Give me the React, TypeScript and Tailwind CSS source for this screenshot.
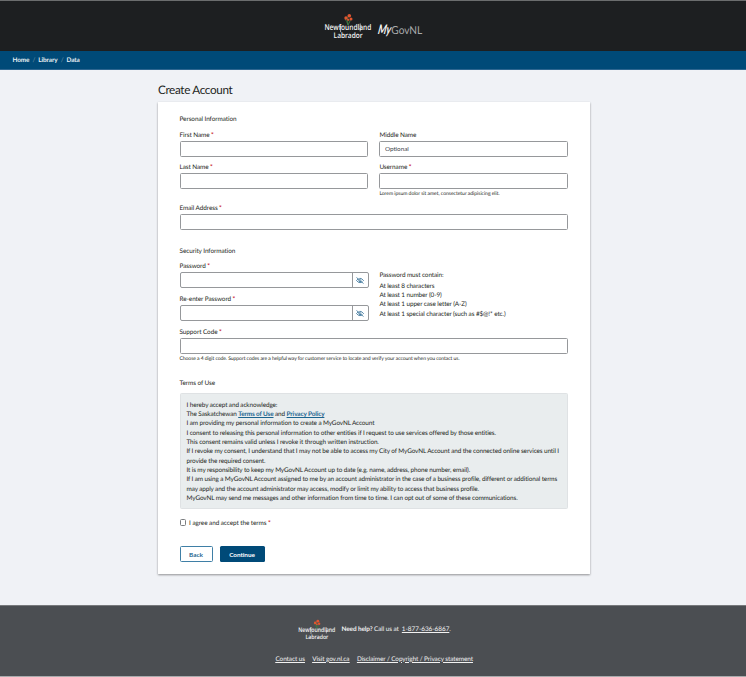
import type { ReactNode } from 'react'

function Wordmark({ className }: { className: string }) {
  return (
    <svg viewBox="0 0 50 28" className={className} fontFamily="'Open Sans', sans-serif" fill="#f4f4f4" overflow="visible">
      <path d="M26 12 Q25 7 26.2 3 M26 12 Q25 8 23 6 M26 12 Q28 9 28.5 6" stroke="#3f7a45" strokeWidth="0.9" fill="none" />
      <g fill="#e2552f">
        <circle cx="24" cy="5" r="1.7" />
        <circle cx="27.3" cy="2.8" r="1.8" />
        <circle cx="29" cy="6" r="1.5" />
        <circle cx="26.2" cy="6.8" r="1.1" />
      </g>
      <path d="M18.6 12.5 V19.2 M38.2 10.5 V18.4" stroke="#f4f4f4" strokeWidth="0.7" />
      <text x="2.4" y="16.8" fontSize="8" fontWeight="600" textLength="47" lengthAdjust="spacingAndGlyphs">Newfoundland</text>
      <text x="11.6" y="24.9" fontSize="7.6" fontWeight="600" textLength="29" lengthAdjust="spacingAndGlyphs">Labrador</text>
    </svg>
  )
}

function Label({ children, required }: { children: ReactNode; required?: boolean }) {
  return (
    <div className="h-[10px] whitespace-nowrap text-[6.4px] leading-[11.4px] tracking-[-0.07px]">
      {children}
      {required && <span className="font-bold text-[#c8202f]"> *</span>}
    </div>
  )
}

function Field({ label, required, placeholder }: { label: string; required?: boolean; placeholder?: string }) {
  return (
    <div>
      <Label required={required}>{label}</Label>
      <input
        placeholder={placeholder}
        className="mt-[1px] block h-4 w-full rounded-[1.5px] border border-[#96989b] bg-white px-[4.5px] text-[6.4px] tracking-[-0.05px] placeholder:text-[#40464c]"
      />
    </div>
  )
}

function EyeSlash() {
  return (
    <svg viewBox="0 0 16 14" className="h-[7px] w-[8px]" fill="none" stroke="#24648f" strokeWidth="1.5">
      <path d="M1 7 Q4.2 2.6 8 2.6 T15 7 Q11.8 11.4 8 11.4 T1 7Z" />
      <circle cx="8" cy="7" r="2.4" />
      <path d="M2.2 0 L16 12" stroke="#ffffff" />
      <path d="M1 1 L15 13" />
    </svg>
  )
}

function PasswordField({ label }: { label: string }) {
  return (
    <div>
      <Label required>{label}</Label>
      <div className="mt-[1px] flex h-4 w-[189px] rounded-[2px] border border-[#96989b]">
        <input type="password" className="min-w-0 flex-1" />
        <button type="button" className="flex w-4 items-center justify-center border-l border-[#96989b]">
          <EyeSlash />
        </button>
      </div>
    </div>
  )
}

const link = 'font-bold text-[#1b648f] underline'

export default function App() {
  return (
    <div className="flex h-[677px] w-[746px] flex-col overflow-hidden border-b border-[#a9abad] bg-[#f0f2f6] font-['Lato',sans-serif] text-[6.22px] text-[#1c1f22] [text-rendering:geometricPrecision]">
      <header className="flex h-[51px] shrink-0 justify-center border-t border-[#6b6d6e] bg-[#1d1f21] pt-[12px]">
        <Wordmark className="h-7 w-[50px]" />
        <svg viewBox="0 0 48 20" className="ml-[4px] mt-[7px] h-5 w-12 overflow-visible">
          <g transform="skewX(-10)">
            <text x="4" y="14.3" fontFamily="Lato" fontSize="13" fontWeight="700" fontStyle="italic" fill="#f5f5f5" textLength="13" lengthAdjust="spacingAndGlyphs">My</text>
          </g>
          <text x="15.3" y="14.3" fontFamily="Lato" fontSize="11" fill="#a9abad" textLength="31" lengthAdjust="spacingAndGlyphs">GovNL</text>
        </svg>
      </header>
      <nav className="flex h-[19px] shrink-0 items-center gap-[3px] border-b border-[#2e6690] bg-[#004a78] pl-[12.4px] pt-[2.6px] text-[6.4px] font-bold tracking-[-0.07px] text-[#e9f0f4]">
        <span>Home</span>
        <span className="font-normal text-[#7e99aa]">/</span>
        <span>Library</span>
        <span className="font-normal text-[#7e99aa]">/</span>
        <span>Data</span>
      </nav>
      <main className="ml-[158px] w-[431.5px] flex-1">
        <h1 className="mt-[12px] h-[16px] text-[11.7px] leading-[16px] tracking-[-0.34px]">Create Account</h1>
        <form className="mt-[3.5px] flex h-[472.5px] flex-col bg-white px-[21.5px] pt-[12.5px] shadow-[0_1px_2px_rgba(0,0,0,0.4)]">
          <Label>Personal Information</Label>
          <div className="mt-[5.5px] grid grid-cols-2 gap-x-[11.3px] gap-y-[5.7px]">
            <Field label="First Name" required />
            <Field label="Middle Name" placeholder="Optional" />
            <Field label="Last Name" required />
            <div>
              <Field label="Username" required />
              <p className="h-[10px] text-[5.1px] leading-[11px] tracking-[-0.055px]">Lorem ipsum dolor sit amet, consectetur adipisicing elit.</p>
            </div>
          </div>
          <div className="mt-[4.3px]">
            <Field label="Email Address" required />
          </div>
          <div className="mt-[15.5px]">
            <Label>Security Information</Label>
          </div>
          <div className="mt-[5.5px] grid grid-cols-2 gap-x-[11.3px]">
            <div className="flex flex-col gap-[5.7px]">
              <PasswordField label="Password" />
              <PasswordField label="Re-enter Password" />
            </div>
            <div className="pt-[9.2px] text-[6.4px] leading-[9.33px] tracking-[-0.1px]">
              <p>Password must contain:</p>
              <ul className="mt-[1.8px]">
                <li>At least 8 characters</li>
                <li>At least 1 number (0-9)</li>
                <li>At least 1 upper case letter (A-Z)</li>
                <li>At least 1 special character (such as #$@!* etc.)</li>
              </ul>
            </div>
          </div>
          <div className="mt-[5.8px]">
            <Field label="Support Code" required />
            <p className="h-[10px] text-[5.1px] leading-[10.6px] tracking-[-0.088px]">
              Choose a 4 digit code. Support codes are a helpful way for customer service to locate and verify your account when you contact us.
            </p>
          </div>
          <div className="mt-[14px]">
            <Label>Terms of Use</Label>
          </div>
          <div className="mt-[5.5px] h-[116px] shrink-0 whitespace-nowrap rounded-[1.5px] border border-[#dfe2e4] bg-[#e9edee] pl-[6px] pt-[6.2px] text-[6.4px] leading-[9.33px] tracking-[-0.115px]">
            <p>I hereby accept and acknowledge:</p>
            <p>The Saskatchewan <a className={link}>Terms of Use</a> and <a className={link}>Privacy Policy</a></p>
            <p>I am providing my personal information to create a MyGovNL Account</p>
            <p>I consent to releasing this personal information to other entities if I request to use services offered by those entities.</p>
            <p>This consent remains valid unless I revoke it through written instruction.</p>
            <p>If I revoke my consent, I understand that I may not be able to access my City of MyGovNL Account and the connected online services until I<br />provide the required consent.</p>
            <p>It is my responsibility to keep my MyGovNL Account up to date (e.g. name, address, phone number, email).</p>
            <p>If I am using a MyGovNL Account assigned to me by an account administrator in the case of a business profile, different or additional terms<br />may apply and the account administrator may access, modify or limit my ability to access that business profile.</p>
            <p>MyGovNL may send me messages and other information from time to time. I can opt out of some of these communications.</p>
          </div>
          <label className="mt-[8.6px] flex h-[10px] items-center gap-[3px]">
            <span className="mb-[1px] size-[6.6px] rounded-[1.5px] border border-[#7b7e81] bg-white" />
            <Label required>I agree and accept the terms</Label>
          </label>
          <div className="mt-[18.4px] flex gap-[7px] text-[6.4px] font-bold">
            <button type="button" className="h-4 w-[33px] rounded-[1.5px] border border-[#3f7fa6] text-[#1b648f]">Back</button>
            <button type="button" className="h-4 w-[45px] rounded-[1.5px] bg-[#004a78] tracking-[-0.05px] text-white">Continue</button>
          </div>
        </form>
      </main>
      <footer className="h-[71px] shrink-0 border-t border-[#77797c] bg-[#4b4e52] text-[6.4px] tracking-[-0.08px] text-[#f2f2f2]">
        <div className="flex pl-[296px] pt-[13px]">
          <Wordmark className="h-[22px] w-[40px]" />
          <p className="ml-[5.5px] mt-[5.6px] leading-[10px]">
            <b>Need help?</b> Call us at <a className="ml-[1.5px] tracking-[-0.03px] underline">1-877-636-6867</a>.
          </p>
        </div>
        <div className="flex gap-[7.5px] pl-[275.5px] pt-[13.6px] leading-[10px] underline">
          <a>Contact us</a>
          <a>Visit gov.nl.ca</a>
          <a>Disclaimer / Copyright / Privacy statement</a>
        </div>
      </footer>
    </div>
  )
}
